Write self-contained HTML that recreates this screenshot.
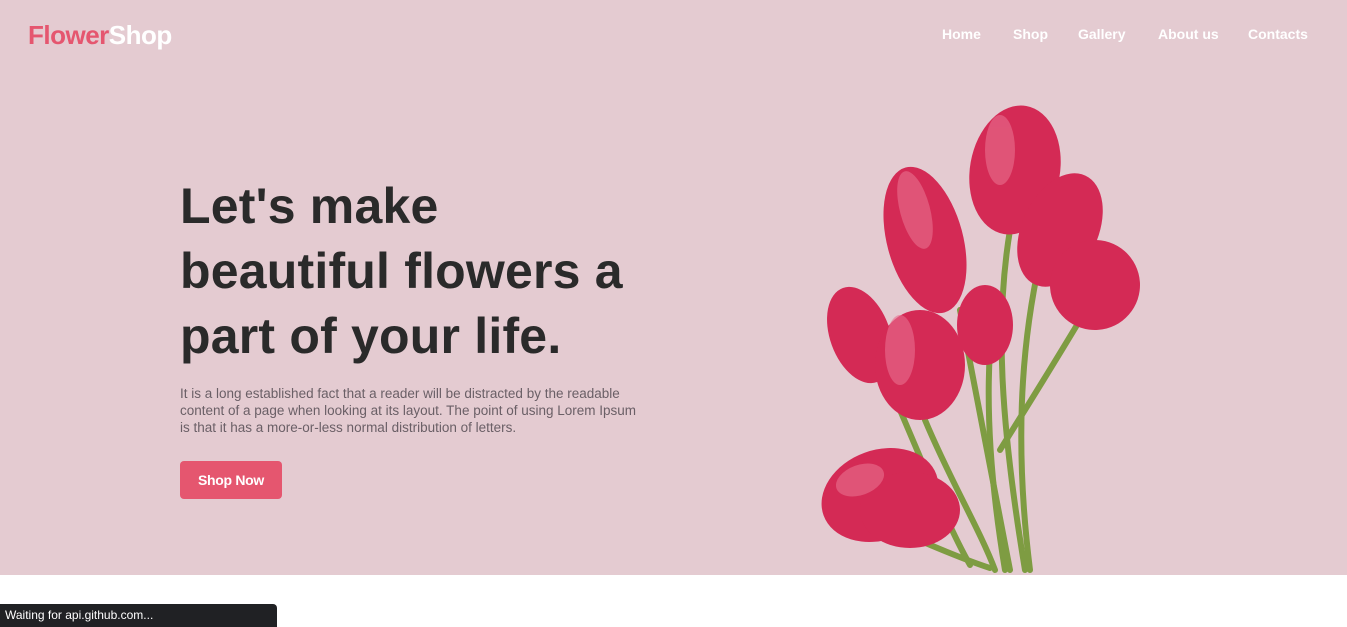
<!DOCTYPE html>
<html><head><meta charset="utf-8"><style>
*{margin:0;padding:0;box-sizing:border-box}
body{width:1347px;height:627px;overflow:hidden;background:#fff;font-family:"Liberation Sans",sans-serif;position:relative}
.hero{position:absolute;left:0;top:0;width:1347px;height:575px;background:#e4cbd1}
.logo{position:absolute;left:28px;top:20px;font-size:26px;font-weight:bold;color:#e5566f;letter-spacing:-0.5px}
.logo span{color:#fff}
nav a{position:absolute;top:26px;color:#fff;font-weight:bold;font-size:14px;text-decoration:none}
h1{position:absolute;left:180px;top:174px;font-size:50px;line-height:65px;color:#2a2a2a;font-weight:bold;white-space:nowrap;letter-spacing:0.2px}
p{position:absolute;left:180px;top:385px;white-space:nowrap;font-size:13.5px;line-height:17px;color:#6a5f66}
.btn{position:absolute;left:180px;top:461px;width:102px;height:38px;background:#e5566f;border-radius:4px;color:#fff;font-weight:bold;font-size:14px;text-align:center;line-height:38px;letter-spacing:-0.3px}
.status{position:absolute;left:0;top:604px;width:277px;height:23px;background:#202124;border-top-right-radius:4px;color:#fff;font-size:12px;line-height:22px;padding-left:5px}
</style></head><body>
<div class="hero">
<div class="logo">Flower<span>Shop</span></div>
<nav><a style="left:942px">Home</a><a style="left:1013px">Shop</a><a style="left:1078px">Gallery</a><a style="left:1158px">About us</a><a style="left:1248px">Contacts</a></nav>
<h1>Let's make<br>beautiful flowers a<br>part of your life.</h1>
<p>It is a long established fact that a reader will be distracted by the readable<br>content of a page when looking at its layout. The point of using Lorem Ipsum<br>is that it has a more-or-less normal distribution of letters.</p>
<div class="btn">Shop Now</div>
<svg style="position:absolute;left:800px;top:90px" width="360" height="485" viewBox="0 0 360 485">
<g stroke="#7e9c42" stroke-width="6" fill="none" stroke-linecap="round">
<path d="M210 140 C195 230 200 330 225 480"/>
<path d="M240 170 C220 260 215 360 230 480"/>
<path d="M160 220 C175 300 195 400 210 480"/>
<path d="M125 330 C150 390 180 440 195 480"/>
<path d="M100 320 C130 390 150 440 170 475"/>
<path d="M280 230 C250 280 225 320 200 360"/>
<path d="M95 440 C130 455 165 470 190 478"/>
<path d="M190 260 C185 340 195 420 205 480"/>
</g>
<g fill="#d42a55">
<ellipse cx="125" cy="150" rx="38" ry="75" transform="rotate(-15 125 150)"/>
<ellipse cx="215" cy="80" rx="45" ry="65" transform="rotate(10 215 80)"/>
<ellipse cx="260" cy="140" rx="38" ry="60" transform="rotate(25 260 140)"/>
<ellipse cx="295" cy="195" rx="45" ry="45" transform="rotate(30 295 195)"/>
<ellipse cx="60" cy="245" rx="30" ry="50" transform="rotate(-20 60 245)"/>
<ellipse cx="120" cy="275" rx="45" ry="55"/>
<ellipse cx="185" cy="235" rx="28" ry="40"/>
<ellipse cx="80" cy="405" rx="60" ry="45" transform="rotate(-20 80 405)"/>
<ellipse cx="110" cy="420" rx="50" ry="38"/>
</g>
<g fill="#e8708f" opacity=".6">
<ellipse cx="115" cy="120" rx="15" ry="40" transform="rotate(-15 115 120)"/>
<ellipse cx="200" cy="60" rx="15" ry="35"/>
<ellipse cx="100" cy="260" rx="15" ry="35"/>
<ellipse cx="60" cy="390" rx="25" ry="15" transform="rotate(-20 60 390)"/>
</g>
</svg>
</div>
<div class="status">Waiting for api.github.com...</div>
</body></html>
